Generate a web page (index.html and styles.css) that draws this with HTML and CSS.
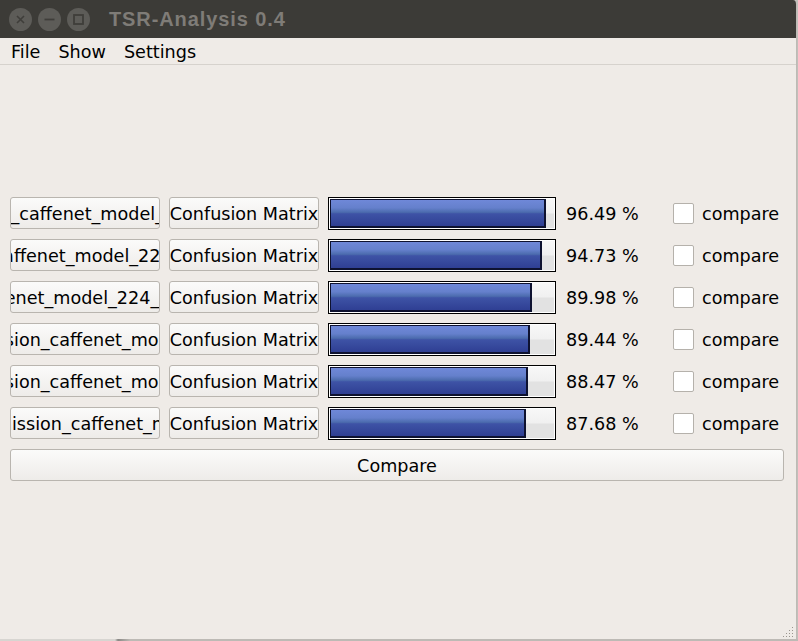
FILE: index.html
```html
<!DOCTYPE html>
<html>
<head>
<meta charset="utf-8">
<link rel="stylesheet" href="styles.css">
</head>
<body>
<div class="window">
  <div class="titlebar">
    <div class="wbtns">
      <span class="wbtn"><svg width="23" height="23" viewBox="0 0 23 23"><circle cx="11.5" cy="11.5" r="11.5" fill="#5d5c58"/><path d="M8 8 L15 15 M15 8 L8 15" stroke="#3f3e3a" stroke-width="1.6"/></svg></span>
      <span class="wbtn"><svg width="23" height="23" viewBox="0 0 23 23"><circle cx="11.5" cy="11.5" r="11.5" fill="#5d5c58"/><path d="M6.5 11.5 L16.5 11.5" stroke="#3f3e3a" stroke-width="1.8"/></svg></span>
      <span class="wbtn"><svg width="23" height="23" viewBox="0 0 23 23"><circle cx="11.5" cy="11.5" r="11.5" fill="#5d5c58"/><rect x="7" y="7" width="9" height="9" fill="none" stroke="#3f3e3a" stroke-width="1.8"/></svg></span>
    </div>
    <div class="title">TSR-Analysis 0.4</div>
  </div>
  <div class="menubar">
    <span class="menu">File</span>
    <span class="menu">Show</span>
    <span class="menu">Settings</span>
  </div>
  <div class="content">
    <div class="rows">
      <div class="row">
        <div class="btn name"><span>ion_caffenet_model_22</span></div>
        <div class="btn cm"><span>Confusion Matrix</span></div>
        <div class="progress"><div class="track"><div class="chunk" style="width:96.49%"></div></div></div>
        <div class="pct">96.49 %</div>
        <div class="check"><span class="box"></span><span class="lbl">compare</span></div>
      </div>
      <div class="row">
        <div class="btn name"><span>_caffenet_model_224_i</span></div>
        <div class="btn cm"><span>Confusion Matrix</span></div>
        <div class="progress"><div class="track"><div class="chunk" style="width:94.73%"></div></div></div>
        <div class="pct">94.73 %</div>
        <div class="check"><span class="box"></span><span class="lbl">compare</span></div>
      </div>
      <div class="row">
        <div class="btn name"><span>caffenet_model_224_iter_</span></div>
        <div class="btn cm"><span>Confusion Matrix</span></div>
        <div class="progress"><div class="track"><div class="chunk" style="width:89.98%"></div></div></div>
        <div class="pct">89.98 %</div>
        <div class="check"><span class="box"></span><span class="lbl">compare</span></div>
      </div>
      <div class="row">
        <div class="btn name"><span>submission_caffenet_model_224</span></div>
        <div class="btn cm"><span>Confusion Matrix</span></div>
        <div class="progress"><div class="track"><div class="chunk" style="width:89.44%"></div></div></div>
        <div class="pct">89.44 %</div>
        <div class="check"><span class="box"></span><span class="lbl">compare</span></div>
      </div>
      <div class="row">
        <div class="btn name"><span>submission_caffenet_model_224</span></div>
        <div class="btn cm"><span>Confusion Matrix</span></div>
        <div class="progress"><div class="track"><div class="chunk" style="width:88.47%"></div></div></div>
        <div class="pct">88.47 %</div>
        <div class="check"><span class="box"></span><span class="lbl">compare</span></div>
      </div>
      <div class="row">
        <div class="btn name"><span>submission_caffenet_model</span></div>
        <div class="btn cm"><span>Confusion Matrix</span></div>
        <div class="progress"><div class="track"><div class="chunk" style="width:87.68%"></div></div></div>
        <div class="pct">87.68 %</div>
        <div class="check"><span class="box"></span><span class="lbl">compare</span></div>
      </div>
      <div class="btn wide"><span>Compare</span></div>
    </div>
  </div>
  <svg class="grip" width="12" height="12" viewBox="0 0 12 12">
    <g fill="#9a968f">
      <rect x="10" y="1" width="1" height="1"/>
      <rect x="7" y="4" width="1" height="1"/><rect x="10" y="4" width="1" height="1"/>
      <rect x="4" y="7" width="1" height="1"/><rect x="7" y="7" width="1" height="1"/><rect x="10" y="7" width="1" height="1"/>
      <rect x="1" y="10" width="1" height="1"/><rect x="4" y="10" width="1" height="1"/><rect x="7" y="10" width="1" height="1"/><rect x="10" y="10" width="1" height="1"/>
    </g>
  </svg>
</div>
<div class="bottomstrip"></div>
</body>
</html>
```
FILE: styles.css
```css
html, body {
  margin: 0;
  padding: 0;
}
body {
  width: 798px;
  height: 641px;
  overflow: hidden;
  background: #c2bfba;
  font-family: "DejaVu Sans", sans-serif;
  font-size: 17.6px;
  color: #000;
}
.window {
  position: relative;
  width: 797px;
  height: 639px;
  background: #efebe7;
  border-right: 1px solid #bdbab5;
  box-sizing: border-box;
  border-top-right-radius: 4px;
  overflow: hidden;
  display: flex;
  flex-direction: column;
}
.titlebar {
  height: 38px;
  flex: none;
  background: #3c3b37;
  display: flex;
  align-items: center;
}
.wbtns {
  display: flex;
  gap: 6px;
  padding-left: 9px;
  padding-top: 1px;
}
.wbtn {
  display: block;
  width: 23px;
  height: 23px;
}
.wbtn svg { display: block; }
.title {
  margin-left: 19px;
  font-family: "Liberation Sans", sans-serif;
  font-weight: bold;
  font-size: 20px;
  letter-spacing: 0.9px;
  color: #7f7c77;
}
.menubar {
  height: 26px;
  flex: none;
  display: flex;
  align-items: center;
  padding-left: 11px;
  gap: 18px;
  border-bottom: 1px solid #d6d2cd;
}
.menu {
  line-height: 20px;
  padding-top: 2px;
}
.content {
  flex: 1;
  padding: 132px 14px 0 10px;
}
.rows {
  display: flex;
  flex-direction: column;
  gap: 10px;
}
.row {
  display: flex;
  align-items: center;
  height: 32px;
}
.btn {
  box-sizing: border-box;
  height: 32px;
  border: 1px solid #b9b5af;
  border-radius: 3px;
  background: linear-gradient(#fbfbfa, #eeece9);
  display: flex;
  justify-content: center;
  align-items: center;
  overflow: hidden;
  white-space: nowrap;
  flex: none;
  padding-top: 2px;
}
.btn span { flex: none; }
.name { width: 150px; }
.cm {
  width: 150px;
  margin-left: 9px;
}
.progress {
  box-sizing: border-box;
  width: 228px;
  height: 33px;
  margin-left: 9px;
  border: 1px solid #000;
  padding: 1px;
  background: #fff;
  flex: none;
}
.track {
  height: 100%;
  background: linear-gradient(#f7f7f7 0%, #f0f0f0 48%, #e2e2e2 52%, #e2e2e2 100%);
}
.chunk {
  box-sizing: border-box;
  height: 100%;
  border: 2px solid #0e1230;
  border-width: 1px 2px 2px 1px;
  background: linear-gradient(#6f88d8 0%, #6580cc 30%, #4c6cae 47%, #3e53a6 53%, #2f3f93 100%);
}
.pct {
  margin-left: 10px;
  width: 107px;
  flex: none;
  padding-top: 2px;
}
.check {
  display: flex;
  align-items: center;
}
.box {
  box-sizing: border-box;
  width: 21px;
  height: 21px;
  background: #fff;
  border: 1px solid #b5b1ab;
  border-radius: 2px;
}
.lbl {
  margin-left: 8px;
  padding-top: 2px;
}
.wide {
  width: 774px;
}
.grip {
  position: absolute;
  right: 2px;
  bottom: 1px;
}
.bottomstrip {
  height: 2px;
  background: linear-gradient(90deg, #d7d5d1 0, #d7d5d1 115px, #8a8885 118px, #bdbab5 130px, #bdbab5 100%);
}
```
